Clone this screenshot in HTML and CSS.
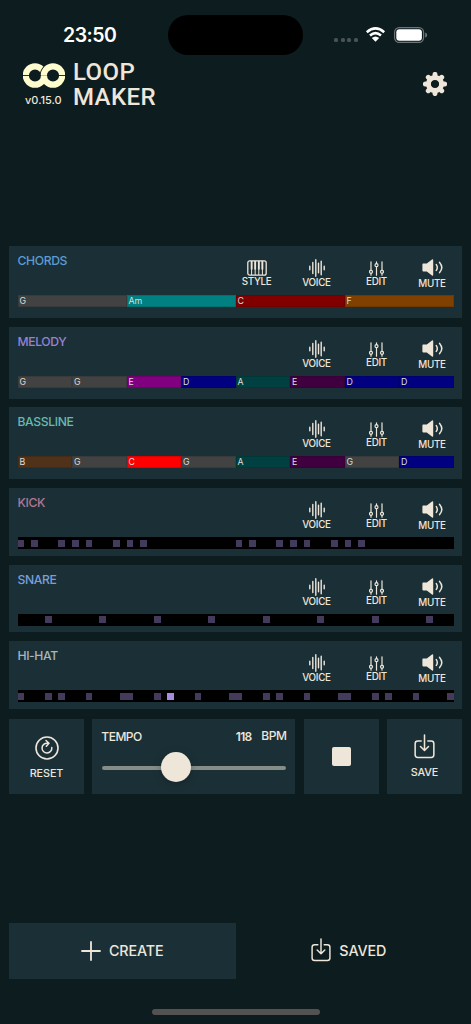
FILE: index.html
```html
<!DOCTYPE html>
<html lang="en">
<head>
  <meta charset="UTF-8">
  <title>Loop Maker</title>
  <meta name="viewport" content="width=device-width, initial-scale=1.0">
  <link rel="stylesheet" href="styles.css">
</head>
<body>
  <svg class="icon-defs" width="0" height="0">
    <symbol id="icon-style" viewBox="0 0 20 16">
      <rect x=".8" y=".8" width="18.4" height="14.4" rx="2" fill="none" stroke="currentColor" stroke-width="1.3"/>
      <path d="M4.6 9v6M8.2 9v6M11.8 9v6M15.4 9v6" stroke="currentColor" stroke-width="1"/>
      <path d="M3.7 1h1.9v8.6H3.7zM7.2 1h1.9v8.6H7.2zM10.9 1h1.9v8.6h-1.9zM14.4 1h1.9v8.6h-1.9z" fill="currentColor"/>
    </symbol>
    <symbol id="icon-voice" viewBox="0 0 16 18">
      <path d="M.8 7.3v3.4M3.8 3.5v11M6.8.7v16.6M9.5 4.3v9.4M12.2 2.2v13.6M15.2 7.3v3.4" stroke="currentColor" stroke-width="1.4" stroke-linecap="round"/>
    </symbol>
    <symbol id="icon-edit" viewBox="0 0 15 15">
      <g fill="none" stroke="currentColor" stroke-width="1.2" stroke-linecap="round">
        <path d="M2 .8v8.4M2 12.4v1.8M7.5.8v1.8M7.5 5.8v8.4M13 .8v8.4M13 12.4v1.8"/>
        <circle cx="2" cy="10.8" r="1.5"/>
        <circle cx="7.5" cy="4.2" r="1.5"/>
        <circle cx="13" cy="10.8" r="1.5"/>
      </g>
    </symbol>
    <symbol id="icon-mute" viewBox="0 0 21 17">
      <path d="M1.2 4.6h3.6L10 .6q1.2-.7 1.2.6v14.6q0 1.3-1.2.6l-5.2-4H1.2q-.8 0-.8-.8V5.4q0-.8.8-.8z" fill="currentColor"/>
      <path d="M14.3 5.6q2 2.9 0 5.8M17.6 3.4q4.4 5.1 0 10.2" fill="none" stroke="currentColor" stroke-width="1.5" stroke-linecap="round"/>
    </symbol>
    <symbol id="icon-save" viewBox="0 0 22 26">
      <g fill="none" stroke="currentColor" stroke-width="1.6" stroke-linecap="round" stroke-linejoin="round">
        <path d="M7.5 7.3H4q-2.8 0-2.8 2.8v11.6q0 2.8 2.8 2.8h14q2.8 0 2.8-2.8V10.1q0-2.8-2.8-2.8h-3.5"/>
        <path d="M11 1v16M6.8 13l4.2 4.2 4.2-4.2"/>
      </g>
    </symbol>
  </svg>

  <div class="status-bar">
    <span class="status-time">23:50</span>
    <span class="island"></span>
    <div class="status-icons">
      <span class="dots"><i></i><i></i><i></i><i></i></span>
      <svg class="wifi" viewBox="0 0 20 15">
        <path d="M1.3 5.2Q10-2.4 18.7 5.2M4.5 8.5q5.5-4.8 11 0" fill="none" stroke="#fff" stroke-width="2.5"/>
        <path d="M6.3 11q3.7-3 7.4 0L10 14.8z" fill="#fff"/>
      </svg>
      <svg class="battery" viewBox="0 0 34 16">
        <rect x=".6" y=".6" width="29" height="14.8" rx="4.6" fill="none" stroke="#6c7678" stroke-width="1.2"/>
        <rect x="2.3" y="2.3" width="25.6" height="11.4" rx="3" fill="#fff"/>
        <path d="M31.2 5.4q2 .6 2 2.6t-2 2.6z" fill="#6c7678"/>
      </svg>
    </div>
  </div>

  <header class="header">
    <div class="brand">
      <svg class="logo" viewBox="0 0 42 25">
        <g fill="none" stroke-width="6.2">
          <circle cx="30" cy="12.5" r="9.2" stroke="#fefccf"/>
          <circle cx="12" cy="12.5" r="9.2" stroke="#fefccf"/>
          <path d="M20.8 12.5a9.2 9.2 0 0 1 9.2-9.2" stroke="#0d1c1f" stroke-width="8"/>
          <path d="M20.8 12.5a9.2 9.2 0 0 1 9.2-9.2" stroke="#fefccf"/>
        </g>
        <path d="M0 12.5h18M24 12.5h18" stroke="#0d1c1f" stroke-width=".9"/>
      </svg>
      <span class="version">v0.15.0</span>
    </div>
    <h1 class="title">LOOP<br>MAKER</h1>
    <svg class="gear" viewBox="0 0 24 24">
      <g stroke="#efe6da" stroke-width="5" stroke-linecap="round">
        <path d="M12 2.4v3M12 18.6v3M2.4 12h3M18.6 12h3M5.3 5.3l2 2M16.7 16.7l2 2M5.3 18.7l2-2M16.7 7.3l2-2"/>
      </g>
      <circle cx="12" cy="12" r="6.6" fill="none" stroke="#efe6da" stroke-width="5"/>
    </svg>
  </header>

  <main class="tracks" id="tracks"></main>

  <section class="transport">
    <button class="panel panel-button">
      <svg class="reset-icon" viewBox="0 0 24 24" fill="none" stroke="currentColor" stroke-linecap="round" stroke-linejoin="round">
        <circle cx="12" cy="12" r="11" stroke-width="1.6"/>
        <path d="M16.8 11.5a4.9 4.9 0 1 1-4.3-4.3h1M11 4.5l3 2.8-2.7 2.9" stroke-width="1.5"/>
      </svg>
      <span>RESET</span>
    </button>
    <div class="panel tempo">
      <div class="tempo-head">
        <span>TEMPO</span>
        <b>118</b>
        <span class="bpm">BPM</span>
      </div>
      <div class="slider"><span class="slider-thumb"></span></div>
    </div>
    <button class="panel panel-button"><i class="stop"></i></button>
    <button class="panel panel-button">
      <svg class="save-icon"><use href="#icon-save"/></svg>
      <span>SAVE</span>
    </button>
  </section>

  <nav class="tabs">
    <a class="tab tab-active">
      <svg class="plus-icon" viewBox="0 0 20 20"><path d="M10 1v18M1 10h18" stroke="currentColor" stroke-width="1.8" stroke-linecap="round"/></svg>
      CREATE
    </a>
    <a class="tab">
      <svg class="tab-save"><use href="#icon-save"/></svg>
      SAVED
    </a>
  </nav>
  <div class="home-indicator"></div>

  <script>
    const tracks = [
      { name: 'CHORDS', color: '#5f9bd3', style: true, notes: ['G', 'Am', 'C', 'F'] },
      { name: 'MELODY', color: '#9782d2', notes: ['G', 'G', 'E', 'D', 'A', 'E-low', 'D', 'D'] },
      { name: 'BASSLINE', color: '#68b9b0', notes: ['B', 'G', 'C-high', 'G', 'A', 'E-low', 'G', 'D'] },
      { name: 'KICK', color: '#b07796', steps: [0, 2, 6, 8, 10, 14, 16, 18, 32, 34, 38, 40, 42, 46, 48, 50] },
      { name: 'SNARE', color: '#799edb', steps: [4, 12, 20, 28, 36, 44, 52, 60] },
      { name: 'HI-HAT', color: '#a8b6c1', playing: 22,
        steps: [0, 4, 6, 10, 15, 16, 20, 22, 26, 31, 32, 36, 38, 42, 47, 48, 52, 54, 58, 63] }
    ];

    const control = (name) => `
      <button class="control control-${name}">
        <svg><use href="#icon-${name}"/></svg>
        <span>${name.toUpperCase()}</span>
      </button>`;

    document.getElementById('tracks').innerHTML = tracks.map(track => {
      const controls = (track.style ? ['style'] : []).concat('voice', 'edit', 'mute');
      const bar = track.notes
        ? `<div class="notes">${track.notes.map(n => `<span class="note note-${n}">${n.split('-')[0]}</span>`).join('')}</div>`
        : `<div class="steps">${track.steps.map(s => `<i class="step${s === track.playing ? ' step-on' : ''}" style="grid-column: ${s + 1}"></i>`).join('')}</div>`;
      return `
        <section class="track${track.steps ? ' track-drum' : ''}">
          <div class="track-head">
            <h2 style="color: ${track.color}">${track.name}</h2>
            <div class="controls">${controls.map(control).join('')}</div>
          </div>
          ${bar}
        </section>`;
    }).join('');
  </script>
</body>
</html>
```
FILE: styles.css
```css
* {
  box-sizing: border-box;
}
body {
  margin: 0;
  height: 1024px;
  display: flex;
  flex-direction: column;
  overflow: hidden;
  background: #0d1c1f;
  color: #efe6da;
  font-family: Inter, sans-serif;
  font-weight: 500;
}
button {
  padding: 0;
  border: none;
  background: none;
  color: inherit;
  font: inherit;
}
svg {
  display: block;
  flex: none;
}
.icon-defs {
  position: absolute;
}

.status-bar {
  display: grid;
  grid-template-columns: 168px 135px 1fr;
  height: 55px;
  padding-top: 15px;
}
.status-time {
  padding: 8px 0 0 63px;
  color: #fff;
  font-size: 19.5px;
  font-weight: 600;
  line-height: 24px;
  letter-spacing: -0.5px;
}
.island {
  height: 40px;
  border-radius: 20px;
  background: #000;
}
.status-icons {
  display: flex;
  align-items: flex-start;
  padding: 12px 0 0 31px;
}
.dots {
  display: flex;
  gap: 2.5px;
  padding-top: 11px;
}
.dots i {
  width: 4px;
  height: 4px;
  border-radius: 1.5px;
  background: #485356;
}
.wifi {
  width: 21px;
  height: 15px;
  margin-left: 7px;
}
.battery {
  width: 34px;
  height: 16px;
  margin-left: 8px;
}

.header {
  display: flex;
  height: 191px;
  padding: 5px 24px 0 23px;
}
.brand {
  width: 50px;
  padding-top: 3px;
}
.logo {
  width: 42px;
  height: 25px;
}
.version {
  display: block;
  margin: 5px 0 0 2px;
  font-size: 11px;
  line-height: 14px;
}
.title {
  flex: 1;
  margin: 0;
  font-family: Roboto, sans-serif;
  font-size: 24px;
  font-weight: 500;
  line-height: 25px;
  letter-spacing: 0.4px;
}
.gear {
  width: 24px;
  height: 24px;
  margin-top: 12px;
}

.tracks {
  display: flex;
  flex-direction: column;
  gap: 8.7px;
  padding: 0 9px;
}
.track {
  height: 72px;
  padding: 0 8.5px;
  background: #1b3036;
}
.track-drum {
  height: 67.8px;
}
.track-head {
  display: flex;
  justify-content: space-between;
  height: 49px;
  margin-right: -4px;
}
.track h2 {
  margin: 7px 0 0;
  font-size: 12.2px;
  font-weight: 500;
  line-height: 15px;
  letter-spacing: -0.4px;
}
.controls {
  display: flex;
  padding-top: 13px;
}
.control {
  display: flex;
  flex-direction: column;
  align-items: center;
  justify-content: flex-start;
  width: 60px;
  font-size: 9.8px;
  line-height: 12px;
  letter-spacing: -0.3px;
}
.control-style svg {
  width: 20px;
  height: 16px;
  margin: 1px 0 0;
}
.control-voice svg {
  width: 16px;
  height: 18px;
}
.control-edit svg {
  width: 15px;
  height: 15px;
  margin: 2px 0 0;
}
.control-mute {
  width: 51px;
}
.control-mute svg {
  width: 21px;
  height: 17px;
  margin-bottom: 2px;
}

.notes {
  display: flex;
  height: 12px;
}
.note {
  flex: 1;
  padding-left: 1px;
  border: 1px solid rgba(0, 0, 0, 0.12);
  color: #ddd;
  font-size: 8.8px;
  font-weight: 400;
  line-height: 10px;
}
.note-G { background: #424242; }
.note-Am { background: #008080; }
.note-C { background: #800000; }
.note-F { background: #804000; }
.note-E { background: #800080; }
.note-D { background: #000080; }
.note-A { background: #004040; }
.note-B { background: #50321a; }
.note-E-low { background: #400040; }
.note-C-high { background: #ff0000; }

.steps {
  display: grid;
  grid-template-columns: repeat(64, 1fr);
  align-items: center;
  height: 12px;
  background: #000;
}
.step {
  grid-row: 1;
  height: 7px;
  background: #443a5c;
}
.step-on {
  background: #a78be0;
}

.transport {
  display: grid;
  grid-template-columns: 75px 203px 75px 75px;
  justify-content: space-between;
  margin: 9.9px 9px 0;
}
.panel {
  height: 75px;
  background: #1b3036;
}
.panel-button {
  display: flex;
  flex-direction: column;
  align-items: center;
  justify-content: center;
  font-size: 10.8px;
  line-height: 14px;
  letter-spacing: -0.1px;
}
.reset-icon {
  width: 24px;
  height: 24px;
  margin: 4px 0 7px;
}
.save-icon {
  width: 21px;
  height: 25px;
  margin: 2px 0 7px;
}
.stop {
  width: 19px;
  height: 19px;
  border-radius: 2px;
  background: #efe6da;
}
.tempo {
  padding: 10px 9px 0;
}
.tempo-head {
  display: flex;
  font-size: 12px;
  line-height: 16px;
  letter-spacing: -0.5px;
}
.tempo-head b {
  margin-left: auto;
  font-weight: 600;
  letter-spacing: -0.8px;
}
.bpm {
  margin: -1px 0 0 10px;
}
.slider {
  position: relative;
  width: 184px;
  height: 4px;
  margin: 21px 0 0 1px;
  border-radius: 2px;
  background: #858d86;
}
.slider-thumb {
  position: absolute;
  top: -13.5px;
  left: 59px;
  width: 30px;
  height: 30px;
  border-radius: 50%;
  background: #efe6da;
  box-shadow: 0 2px 8px rgba(0, 0, 0, 0.25);
}

.tabs {
  display: flex;
  height: 56px;
  margin: 129.4px 9px 0;
}
.tab {
  display: flex;
  flex: 1;
  align-items: center;
  justify-content: center;
  gap: 8px;
  font-size: 14.3px;
  line-height: 18px;
  letter-spacing: -0.1px;
}
.tab-active {
  background: #1b3036;
}
.plus-icon {
  width: 20px;
  height: 20px;
}
.tab-save {
  width: 20px;
  height: 24px;
  margin-top: -3px;
}
.home-indicator {
  width: 168px;
  height: 6px;
  margin: 30px auto 0;
  border-radius: 3px;
  background: #545151;
}
```
